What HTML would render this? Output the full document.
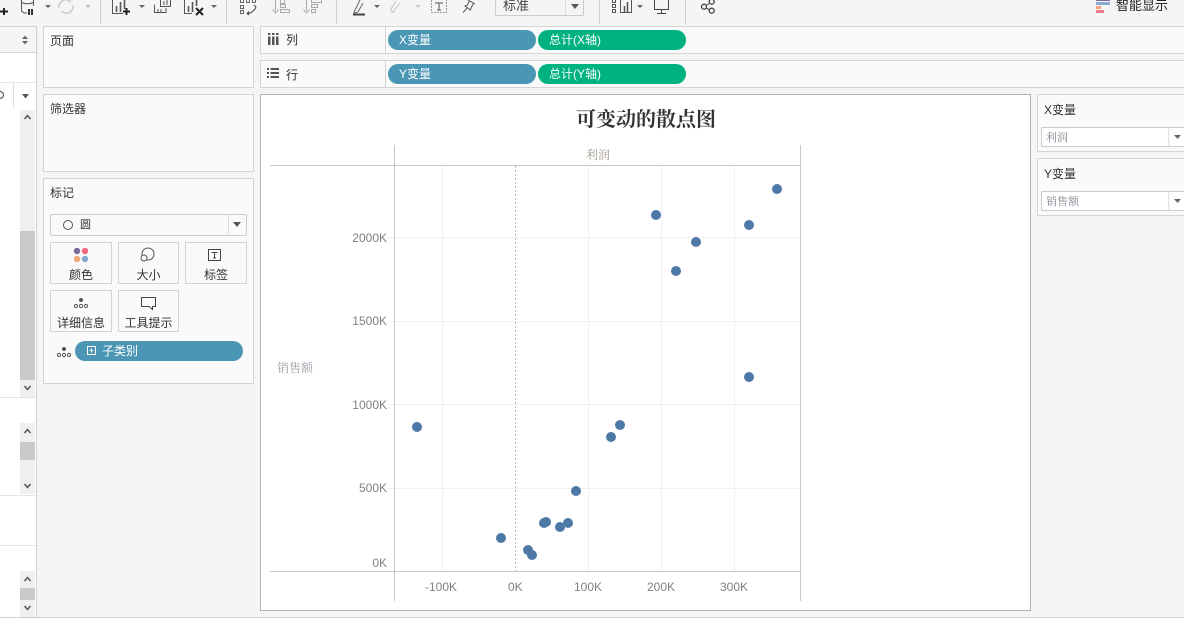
<!DOCTYPE html>
<html lang="zh"><head><meta charset="utf-8">
<style>
html,body{margin:0;padding:0;overflow:hidden;width:1184px;height:618px}
body{background:#f5f5f5;position:relative;font-family:"Liberation Sans","Noto Sans CJK SC",sans-serif;font-size:12px;color:#333}
.a{position:absolute;box-sizing:border-box}
.t{position:absolute;white-space:nowrap;line-height:16px}
.box{position:absolute;box-sizing:border-box;background:#fafafa;border:1px solid #d4d4d4}
.pill{position:absolute;height:20px;border-radius:10px;color:#fff;line-height:20px;font-size:12px;box-sizing:border-box}
.b{background:#4a96b4}.g{background:#00b27f}
.card{position:absolute;box-sizing:border-box;background:#fafafa;border:1px solid #d4d4d4;text-align:center}
.card span{position:absolute;left:0;right:0;top:24px;line-height:16px;font-size:12px;color:#333;white-space:nowrap}
.card svg{position:absolute;left:50%;top:3px;margin-left:-12px}
.sep{position:absolute;top:0;height:24px;width:1px;background:#d0d0d0}
.ax{position:absolute;color:#808080;font-size:12px;line-height:14px;white-space:nowrap}
.sb{position:absolute;left:20px;width:15px;background:#f0f0f0}
.th{position:absolute;left:0;width:15px;background:#cacaca}
svg{display:block;overflow:visible}
.ic{position:absolute}
</style></head><body>

<!-- toolbar icons -->
<svg class="ic" style="left:0;top:0" width="720" height="26" fill="none" stroke="#555" stroke-width="1">
<path d="M0 11.500H8M4 8V15" stroke="#222" stroke-width="2"/>
<path d="M21.500 0V11L24 13H27M33.500 0V6M21.500 2.500Q27.500 5 33.500 2.500" />
<path d="M29 9V15M32 9V15" stroke="#333" stroke-width="2"/>
<path d="M45 5l3 3 3-3z" fill="#666" stroke="none"/>
<path d="M59 8a7 7 0 0 1 12-6M73 5a7 7 0 0 1-12 6" stroke="#ccc" stroke-width="1.500"/>
<path d="M85 5l3 3 3-3z" fill="#bbb" stroke="none"/>
<path d="M112.500 0V13.500H123" />
<path d="M116.500 6V12M120.500 2V12M124.500 0V9" stroke-width="1.600"/>
<path d="M123 11.500H130M126.500 8V15" stroke="#222" stroke-width="2"/>
<path d="M139 5l3 3 3-3z" fill="#666" stroke="none"/>
<path d="M154.500 4.500V12.500H166V8M158 9V12M161 9V12M160.500 0V6.500H170.500V0M164 1V5M167 0V5"/>
<path d="M184.500 0V13.500H192"/>
<path d="M188.500 6V12M192.500 2V12M196.500 0V6" stroke-width="1.600"/>
<path d="M196 8L203 15M203 8L196 15" stroke="#222" stroke-width="2"/>
<path d="M211 5l3 3 3-3z" fill="#666" stroke="none"/>
<path d="M240.500 -0.500h3v3h-3zM240.500 5.500h3v3h-3zM240.500 10.500h3v3h-3zM246.500 -0.500h3v3h-3zM252.500 -0.500h3v3h-3z" stroke="#666"/>
<path d="M247 13.500Q253 13.500 256 7M254 5l2 2M247 13.500l2-2M247 13.500l2 1.500" stroke="#444"/>
<path d="M275.500 0V11M272.500 9.500l3 3.500 3-3.500" stroke="#aaa"/><path d="M280.500 -0.500h4v4h-4zM280.500 4.500h5v3h-5zM280.500 9.500h9v3h-9z" stroke="#aaa"/>
<path d="M306.500 0V11M303.500 9.500l3 3.500 3-3.500" stroke="#aaa"/><path d="M311.500 -0.500h10v3h-10zM311.500 4.500h6v3h-6zM311.500 9.500h4v3h-4z" stroke="#aaa"/>
<path d="M354.500 11L360 0M358 12L363 3M354.500 11L354 13L358 12" stroke="#666"/><path d="M353 14.500H365" stroke="#444" stroke-width="2"/>
<path d="M374 5l3 3 3-3z" fill="#666" stroke="none"/>
<path d="M391 9L396 1M393 12L400 3M391 9Q391 13 394 12" stroke="#ccc" stroke-width="1.300"/>
<path d="M415 5l3 3 3-3z" fill="#ccc" stroke="none"/>
<path d="M431.500 0V12.500H446.500V0" stroke="#999" stroke-dasharray="2 1"/>
<path d="M435 3H443M439 3V10M437 10H441" stroke="#555"/>
<path d="M468 0L475 4M469.500 1L467 5.500L465 6L470.500 10L471 8L473.500 3M467 8L463 12.500" stroke="#555"/>
<path d="M612.500 -0.500h3v3h-3zM612.500 4.500h3v3h-3zM612.500 9.500h3v3h-3zM620.500 0V12.500H631.500V0" stroke="#555"/>
<path d="M624.500 6V12M627.500 2V12" stroke="#555" stroke-width="1.500"/>
<path d="M637 5l3 3 3-3z" fill="#666" stroke="none"/>
<path d="M654.500 0V9.500H668.500V0M661.500 10V14M657 13.500H666" stroke="#444"/>
<circle cx="711.700" cy="1.700" r="2.500" stroke="#444" stroke-width="1.300"/><circle cx="704" cy="6.700" r="2.500" stroke="#444" stroke-width="1.300"/><circle cx="711.700" cy="10.700" r="2.500" stroke="#444" stroke-width="1.300"/>
<path d="M706 5.500L710 3M706 8L710 10" stroke="#444"/>
</svg>
<div class="sep" style="left:100px"></div>
<div class="sep" style="left:226px"></div>
<div class="sep" style="left:336px"></div>
<div class="sep" style="left:599px"></div>
<div class="sep" style="left:685px"></div>

<!-- combo standard -->
<div class="a" style="left:495px;top:-6px;width:89px;height:22px;background:#f5f5f5;border:1px solid #ccc;border-radius:2px"></div>
<div class="a" style="left:565px;top:0;width:1px;height:15px;background:#ddd"></div>
<svg class="ic" style="left:571px;top:4px" width="10" height="6"><path d="M0 0H8L4 5z" fill="#555"/></svg>
<div class="t" style="left:503px;top:-2px;font-size:13px;color:#444">标准</div>

<!-- smart show -->
<div class="a" style="left:1096px;top:-2px;width:14px;height:3px;background:#7a6a9a"></div>
<div class="a" style="left:1096px;top:2px;width:14px;height:3px;background:#86a9cf"></div>
<div class="a" style="left:1096px;top:6px;width:5px;height:3px;background:#f2a67c"></div>
<div class="a" style="left:1096px;top:10px;width:8px;height:3px;background:#f4788a"></div>
<div class="t" style="left:1116px;top:-2px;font-size:13px;color:#222">智能显示</div>

<!-- left strip -->
<div class="a" style="left:0;top:26px;width:36px;height:27px;background:#f5f5f5;border-top:1px solid #d4d4d4;border-bottom:1px solid #d4d4d4"></div>
<svg class="ic" style="left:22px;top:35px" width="8" height="10"><path d="M0 4L3 0.500 6 4zM0 6L3 9.500 6 6z" fill="#666"/></svg>
<div class="a" style="left:0;top:53px;width:36px;height:564px;background:#fff"></div>
<div class="a" style="left:36px;top:26px;width:1px;height:591px;background:#d0d0d0"></div>
<div class="a" style="left:0;top:82px;width:36px;height:1px;background:#e8e8e8"></div>
<svg class="ic" style="left:0;top:90px" width="6" height="10" fill="none"><circle cx="0" cy="5" r="3.500" stroke="#444"/></svg>
<div class="a" style="left:13px;top:83px;width:1px;height:25px;background:#ddd"></div>
<svg class="ic" style="left:22px;top:94px" width="8" height="5"><path d="M0 0H7L3.500 4.500z" fill="#555"/></svg>
<div class="sb" style="top:110px;height:287px"><div class="th" style="top:121px;height:149px"></div></div>
<svg class="ic" style="left:24px;top:114px" width="8" height="6" fill="none" stroke="#555" stroke-width="1.500"><path d="M0.500 5L3.500 1.500 6.500 5"/></svg>
<svg class="ic" style="left:24px;top:385px" width="8" height="6" fill="none" stroke="#555" stroke-width="1.500"><path d="M0.500 1L3.500 4.500 6.500 1"/></svg>
<div class="a" style="left:0;top:397px;width:36px;height:1px;background:#e4e4e4"></div>
<div class="sb" style="top:423px;height:71px"><div class="th" style="top:19px;height:18px"></div></div>
<svg class="ic" style="left:24px;top:428px" width="8" height="6" fill="none" stroke="#555" stroke-width="1.500"><path d="M0.500 5L3.500 1.500 6.500 5"/></svg>
<svg class="ic" style="left:24px;top:483px" width="8" height="6" fill="none" stroke="#555" stroke-width="1.500"><path d="M0.500 1L3.500 4.500 6.500 1"/></svg>
<div class="a" style="left:0;top:495px;width:36px;height:1px;background:#e4e4e4"></div>
<div class="a" style="left:0;top:545px;width:36px;height:1px;background:#e4e4e4"></div>
<div class="sb" style="top:571px;height:46px"><div class="th" style="top:17px;height:12px"></div></div>
<svg class="ic" style="left:24px;top:576px" width="8" height="6" fill="none" stroke="#555" stroke-width="1.500"><path d="M0.500 5L3.500 1.500 6.500 5"/></svg>
<svg class="ic" style="left:24px;top:605px" width="8" height="6" fill="none" stroke="#555" stroke-width="1.500"><path d="M0.500 1L3.500 4.500 6.500 1"/></svg>
<div class="a" style="left:0;top:617px;width:1184px;height:1px;background:#cfcfcf"></div>

<!-- pages / filters -->
<div class="box" style="left:43px;top:26px;width:211px;height:62px"></div>
<div class="t" style="left:50px;top:33px">页面</div>
<div class="box" style="left:43px;top:94px;width:211px;height:78px"></div>
<div class="t" style="left:50px;top:101px">筛选器</div>

<!-- marks -->
<div class="box" style="left:43px;top:178px;width:211px;height:206px"></div>
<div class="t" style="left:50px;top:185px">标记</div>
<div class="a" style="left:50px;top:214px;width:197px;height:22px;background:#fafafa;border:1px solid #ccc;border-radius:2px"></div>
<div class="a" style="left:228px;top:215px;width:1px;height:20px;background:#ddd"></div>
<svg class="ic" style="left:233px;top:222px" width="10" height="6"><path d="M0 0H8L4 5z" fill="#555"/></svg>
<svg class="ic" style="left:62px;top:219px" width="12" height="12" fill="none"><circle cx="6" cy="6" r="4.500" stroke="#555" stroke-width="1"/></svg>
<div class="t" style="left:80px;top:217px;font-size:11px">圆</div>

<div class="card" style="left:50px;top:242px;width:62px;height:42px"><svg width="24" height="20"><circle cx="8" cy="5" r="3.200" fill="#7a6a9a"/><circle cx="16" cy="5" r="3.200" fill="#f2677d"/><circle cx="8" cy="13" r="3.200" fill="#f2a67c"/><circle cx="16" cy="13" r="3.200" fill="#86a9cf"/></svg><span>颜色</span></div>
<div class="card" style="left:118px;top:242px;width:61px;height:42px"><svg width="24" height="20" fill="none" stroke="#555"><circle cx="11" cy="8" r="6"/><circle cx="7" cy="12" r="3" fill="#fafafa"/></svg><span>大小</span></div>
<div class="card" style="left:185px;top:242px;width:62px;height:42px"><svg width="24" height="20" fill="none" stroke="#444"><rect x="4.500" y="3.500" width="12" height="11"/><path d="M7.500 6.500H13.500M10.500 6.500V12M9 12H12"/></svg><span>标签</span></div>
<div class="card" style="left:50px;top:290px;width:62px;height:42px"><svg width="24" height="20" fill="none" stroke="#555"><circle cx="12" cy="6" r="2" fill="#555" stroke="none"/><circle cx="7" cy="12" r="1.600"/><circle cx="12" cy="12" r="1.600"/><circle cx="17" cy="12" r="1.600"/></svg><span>详细信息</span></div>
<div class="card" style="left:118px;top:290px;width:61px;height:42px"><svg width="24" height="20" fill="none" stroke="#444"><path d="M4.500 3.500H18.500V12.500H15.500V15.500L12 12.500H4.500z"/></svg><span>工具提示</span></div>

<svg class="ic" style="left:57px;top:346px" width="15" height="12" fill="none" stroke="#555"><circle cx="7" cy="3" r="2" fill="#555" stroke="none"/><circle cx="2" cy="9" r="1.600"/><circle cx="7" cy="9" r="1.600"/><circle cx="12" cy="9" r="1.600"/></svg>
<div class="pill b" style="left:75px;top:341px;width:168px;padding-left:27px">子类别</div>
<svg class="ic" style="left:87px;top:346px" width="10" height="10" fill="none" stroke="#fff"><path d="M0.500 0.500H8.500V8.500H0.500zM2.500 4.500H6.500M4.500 2.500V6.500"/></svg>

<!-- shelves -->
<div class="box" style="left:260px;top:26px;width:924px;height:28px;border-right:0"></div>
<div class="a" style="left:385px;top:27px;width:1px;height:26px;background:#d4d4d4"></div>
<svg class="ic" style="left:268px;top:33px" width="10" height="12" fill="#555"><rect x="0" y="0" width="2.500" height="2"/><rect x="4" y="0" width="2.500" height="2"/><rect x="8" y="0" width="2.500" height="2"/><rect x="0" y="3.500" width="2.500" height="8.500"/><rect x="4" y="3.500" width="2.500" height="8.500"/><rect x="8" y="3.500" width="2.500" height="8.500"/></svg>
<div class="t" style="left:286px;top:32px">列</div>
<div class="pill b" style="left:388px;top:30px;width:148px;padding-left:11px">X变量</div>
<div class="pill g" style="left:538px;top:30px;width:148px;padding-left:11px">总计(X轴)</div>

<div class="box" style="left:260px;top:60px;width:924px;height:28px;border-right:0"></div>
<div class="a" style="left:385px;top:61px;width:1px;height:26px;background:#d4d4d4"></div>
<svg class="ic" style="left:267px;top:68px" width="12" height="10" fill="#555"><rect x="0" y="0" width="2" height="2"/><rect x="3.500" y="0" width="8.500" height="2"/><rect x="0" y="4" width="2" height="2"/><rect x="3.500" y="4" width="8.500" height="2"/><rect x="0" y="8" width="2" height="2"/><rect x="3.500" y="8" width="8.500" height="2"/></svg>
<div class="t" style="left:286px;top:67px">行</div>
<div class="pill b" style="left:388px;top:64px;width:148px;padding-left:11px">Y变量</div>
<div class="pill g" style="left:538px;top:64px;width:148px;padding-left:11px">总计(Y轴)</div>

<!-- right controls -->
<div class="box" style="left:1037px;top:94px;width:147px;height:58px;border-right:0"></div>
<div class="t" style="left:1044px;top:102px;color:#333">X变量</div>
<div class="a" style="left:1041px;top:127px;width:143px;height:20px;background:#fff;border:1px solid #ccc;border-right:0;border-radius:2px 0 0 2px"></div>
<div class="a" style="left:1168px;top:128px;width:1px;height:18px;background:#e2e2e2"></div>
<svg class="ic" style="left:1174px;top:135px" width="8" height="5"><path d="M0 0H7L3.500 4z" fill="#666"/></svg>
<div class="t" style="left:1046px;top:129px;font-size:11px;color:#8a7f8f;font-family:'Noto Serif CJK SC',serif">利润</div>
<div class="box" style="left:1037px;top:158px;width:147px;height:58px;border-right:0"></div>
<div class="t" style="left:1044px;top:166px;color:#333">Y变量</div>
<div class="a" style="left:1041px;top:191px;width:143px;height:20px;background:#fff;border:1px solid #ccc;border-right:0;border-radius:2px 0 0 2px"></div>
<div class="a" style="left:1168px;top:192px;width:1px;height:18px;background:#e2e2e2"></div>
<svg class="ic" style="left:1174px;top:199px" width="8" height="5"><path d="M0 0H7L3.500 4z" fill="#666"/></svg>
<div class="t" style="left:1046px;top:193px;font-size:11px;color:#8a7f8f;font-family:'Noto Serif CJK SC',serif">销售额</div>

<!-- chart -->
<div class="a" style="left:260px;top:94px;width:771px;height:517px;background:#fff;border:1px solid #b4b4b4"></div>
<div class="t" style="left:576px;top:108px;line-height:24px;font-size:20px;font-weight:bold;color:#333;font-family:'Liberation Serif','Noto Serif CJK SC',serif">可变动的散点图</div>
<div class="t" style="left:586px;top:147px;color:#a09a90;font-family:'Noto Serif CJK SC',serif">利润</div>
<div class="t" style="left:277px;top:360px;color:#a09aa5;font-family:'Noto Serif CJK SC',serif">销售额</div>

<svg class="ic" style="left:0;top:0" width="1184" height="618" shape-rendering="crispEdges">
<g stroke="#f0f0f0" stroke-width="1">
<path d="M442.500 166V571M588.500 166V571M661.500 166V571M734.500 166V571"/>
<path d="M388 237.500H800M388 321.500H800M388 404.500H800M388 488.500H800"/>
</g>
<path d="M515.500 166V571" stroke="#b8b8b8" stroke-dasharray="2 2"/>
<g stroke="#c8c8c8" stroke-width="1">
<path d="M394.500 145V601M800.500 145V601M270 165.500H800M270 571.500H800"/>
</g>
</svg>
<svg class="ic" style="left:0;top:0" width="1184" height="618" fill="#4e79a7">
<circle cx="417" cy="427" r="5"/><circle cx="501" cy="538" r="5"/><circle cx="528" cy="550" r="5"/><circle cx="532" cy="555" r="5"/><circle cx="544" cy="523" r="5"/><circle cx="546" cy="522" r="5"/><circle cx="560" cy="527" r="5"/><circle cx="568" cy="523" r="5"/><circle cx="576" cy="491" r="5"/><circle cx="611" cy="437" r="5"/><circle cx="620" cy="425" r="5"/><circle cx="656" cy="215" r="5"/><circle cx="676" cy="271" r="5"/><circle cx="696" cy="242" r="5"/><circle cx="749" cy="225" r="5"/><circle cx="777" cy="189" r="5"/><circle cx="749" cy="377" r="5"/>
</svg>
<div class="ax" style="right:797px;top:231px">2000K</div>
<div class="ax" style="right:797px;top:314px">1500K</div>
<div class="ax" style="right:797px;top:398px">1000K</div>
<div class="ax" style="right:797px;top:481px">500K</div>
<div class="ax" style="right:797px;top:556px">0K</div>
<div class="ax" style="left:425px;top:580px">-100K</div>
<div class="ax" style="left:508px;top:580px">0K</div>
<div class="ax" style="left:574px;top:580px">100K</div>
<div class="ax" style="left:647px;top:580px">200K</div>
<div class="ax" style="left:720px;top:580px">300K</div>
</body></html>
